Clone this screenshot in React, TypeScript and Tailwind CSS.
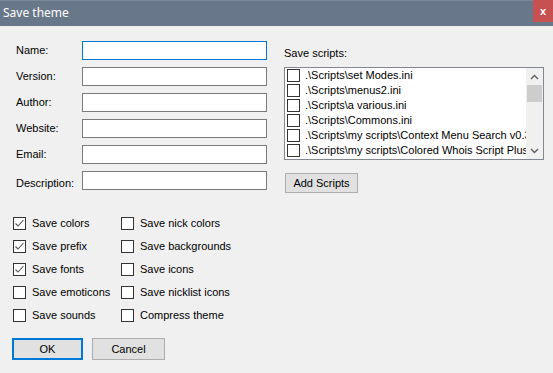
import React from "react";

const fields = ["Name:", "Version:", "Author:", "Website:", "Email:", "Description:"];

const scripts = [
  ".\\Scripts\\set Modes.ini",
  ".\\Scripts\\menus2.ini",
  ".\\Scripts\\a various.ini",
  ".\\Scripts\\Commons.ini",
  ".\\Scripts\\my scripts\\Context Menu Search v0.3.ini",
  ".\\Scripts\\my scripts\\Colored Whois Script Plus.ini",
];

const options: [string, boolean, string, boolean][] = [
  ["Save colors", true, "Save nick colors", false],
  ["Save prefix", true, "Save backgrounds", false],
  ["Save fonts", true, "Save icons", false],
  ["Save emoticons", false, "Save nicklist icons", false],
  ["Save sounds", false, "Compress theme", false],
];

function Check({ checked }: { checked?: boolean }) {
  return (
    <span className="flex h-[13px] w-[13px] shrink-0 items-center justify-center border border-[#333333] bg-white">
      {checked && (
        <svg width="11" height="11" viewBox="0 0 11 11">
          <path d="M1.5 5.5 L4 8 L9.5 2" fill="none" stroke="#555555" strokeWidth="1.1" />
        </svg>
      )}
    </span>
  );
}

function Option({ label, checked }: { label: string; checked: boolean }) {
  return (
    <div className="flex h-[23px] items-center">
      <Check checked={checked} />
      <span className="ml-[6px]">{label}</span>
    </div>
  );
}

export default function App() {
  return (
    <div
      className="h-[373px] w-[553px] overflow-hidden bg-[#f0f0f0] text-[11px] leading-[13px] text-black"
      style={{ fontFamily: '"Liberation Sans", Arial, sans-serif' }}
    >
      {/* title bar */}
      <div className="flex h-[26px] justify-between bg-[#687789] border-t border-[#7a8899]">
        <span
          className="ml-[3px] mt-[4px] text-[12px] leading-[16px] text-white"
          style={{ fontFamily: '"Noto Sans", "Open Sans", sans-serif' }}
        >
          Save theme
        </span>
        <div className="-mt-px flex h-[22px] w-[20px] items-center justify-center bg-[#c75050] text-[11px] font-bold text-white">
          x
        </div>
      </div>

      {/* fields + scripts */}
      <div className="flex pt-[15px]">
        <div className="flex flex-col gap-[7px] pl-[16px]">
          {fields.map((f, i) => (
            <div key={f} className="flex h-[19px] items-center">
              <span className={`w-[66px] ${i === 5 ? "mt-[6px]" : ""}`}>{f}</span>
              <div
                className={`h-[19px] w-[185px] border bg-white ${
                  i === 0 ? "border-[#0078d7]" : "border-[#7a7a7a]"
                }`}
              />
            </div>
          ))}
        </div>

        <div className="ml-[17px] flex flex-col">
          <span className="mt-[6px]">Save scripts:</span>
          <div className="mt-[7px] flex h-[93px] w-[260px] border border-[#828790] bg-white">
            <div className="w-[241px] overflow-hidden whitespace-nowrap">
              {scripts.map((s) => (
                <div key={s} className="flex h-[15px] items-center pl-[2px]">
                  <Check />
                  <span className="ml-[5px]">{s}</span>
                </div>
              ))}
            </div>
            <div className="flex w-[17px] flex-col bg-[#f0f0f0]">
              <div className="flex h-[17px] items-center justify-center">
                <svg width="9" height="6" viewBox="0 0 9 6">
                  <path d="M1 5 L4.5 1.5 L8 5" fill="none" stroke="#606060" strokeWidth="1.4" />
                </svg>
              </div>
              <div className="mx-px h-[17px] bg-[#cdcdcd]" />
              <div className="flex-1" />
              <div className="flex h-[17px] items-center justify-center">
                <svg width="9" height="6" viewBox="0 0 9 6">
                  <path d="M1 1 L4.5 4.5 L8 1" fill="none" stroke="#606060" strokeWidth="1.4" />
                </svg>
              </div>
            </div>
          </div>
          <button className="ml-px mt-[13px] h-[20px] w-[73px] border border-[#adadad] bg-[#e1e1e1] text-[11px]">
            Add Scripts
          </button>
        </div>
      </div>

      {/* options */}
      <div className="mt-[19px] flex pl-[13px]">
        <div className="w-[108px]">
          {options.map((o) => (
            <Option key={o[0]} label={o[0]} checked={o[1]} />
          ))}
        </div>
        <div>
          {options.map((o) => (
            <Option key={o[2]} label={o[2]} checked={o[3]} />
          ))}
        </div>
      </div>

      {/* buttons */}
      <div className="mt-[11px] flex gap-[9px] pl-[12px]">
        <button className="h-[22px] w-[71px] border-2 border-[#0078d7] bg-[#e1e1e1] text-[11px]">OK</button>
        <button className="h-[22px] w-[73px] border border-[#adadad] bg-[#e1e1e1] text-[11px]">Cancel</button>
      </div>
    </div>
  );
}
